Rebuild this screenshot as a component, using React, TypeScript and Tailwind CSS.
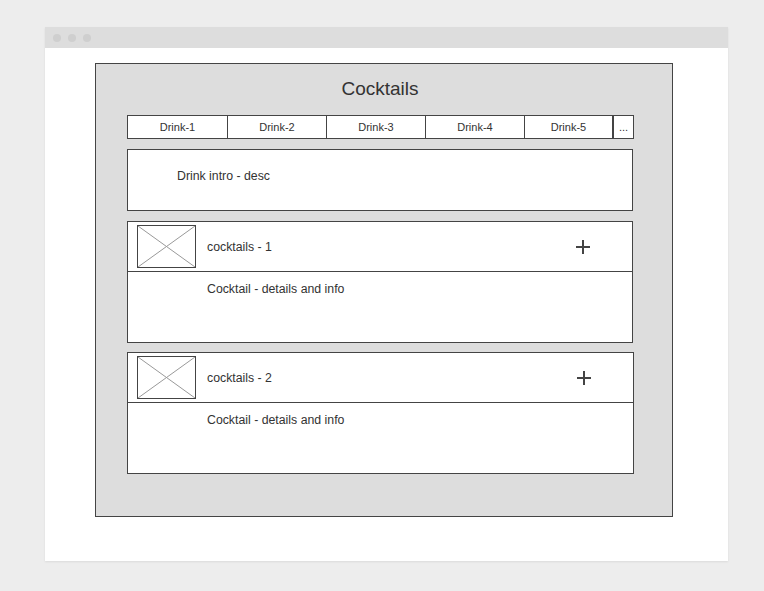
const tabs = [
  { label: "Drink-1", w: "w-[100px]" },
  { label: "Drink-2", w: "w-[99px]" },
  { label: "Drink-3", w: "w-[99px]" },
  { label: "Drink-4", w: "w-[99px]" },
  { label: "Drink-5", w: "w-[88px]" },
];

function Placeholder() {
  return (
    <div className="w-[59px] h-[43px] border border-[#444] bg-white shrink-0">
      <svg width="57" height="41" viewBox="0 0 57 41" className="block">
        <line x1="0" y1="0" x2="57" y2="41" stroke="#999" strokeWidth="1" />
        <line x1="57" y1="0" x2="0" y2="41" stroke="#999" strokeWidth="1" />
      </svg>
    </div>
  );
}

function Plus() {
  return (
    <svg width="16" height="16" viewBox="0 0 16 16" className="block">
      <line x1="8" y1="1" x2="8" y2="15" stroke="#444" strokeWidth="2" />
      <line x1="1" y1="8" x2="15" y2="8" stroke="#444" strokeWidth="2" />
    </svg>
  );
}

function CocktailCard({ name, extra }: { name: string; extra?: boolean }) {
  return (
    <div className={`${extra ? "w-[507px]" : "w-[506px]"} h-[122px] border border-[#444] bg-white flex flex-col`}>
      <div className="h-[50px] border-b border-[#444] flex items-center pl-[9px] shrink-0">
        <Placeholder />
        <span className="ml-[11px] mt-[2px] text-[12.3px] text-[#333]">{name}</span>
        <div className="ml-auto mr-[41px]">
          <Plus />
        </div>
      </div>
      <div className="pl-[79px] pt-[9px] text-[12.3px] leading-4 text-[#333]">Cocktail - details and info</div>
    </div>
  );
}

export default function App() {
  return (
    <div className="min-h-[591px] bg-[#ededed] pt-[27px] pl-[45px] font-['Liberation_Sans',Arial,sans-serif]">
      <div className="w-[683px] h-[534px] bg-white shadow-[0_1px_2px_rgba(0,0,0,0.08)]">
        <div className="h-[21px] bg-[#dddddd] flex items-center gap-[7px] pl-[8px]">
          <span className="w-2 h-2 rounded-full bg-[#cfcfcf]" />
          <span className="w-2 h-2 rounded-full bg-[#cfcfcf]" />
          <span className="w-2 h-2 rounded-full bg-[#cfcfcf]" />
        </div>
        <div className="pt-[15px] pl-[50px]">
          <div className="w-[578px] h-[454px] border border-[#444] bg-[#dddddd] flex flex-col pl-[31px]">
            <h1 className="w-[506px] text-center text-[19px] leading-[22px] text-[#333] mt-[14px]">Cocktails</h1>
            <div className="mt-[15px] w-[507px] h-[24px] border border-[#444] bg-white flex">
              {tabs.map((t) => (
                <div
                  key={t.label}
                  className={`${t.w} border-r border-[#444] flex items-center justify-center text-[11px] text-[#333]`}
                >
                  {t.label}
                </div>
              ))}
              <div className="flex-1 border-l border-[#444] flex items-center justify-center text-[11px] text-[#333]">
                ...
              </div>
            </div>
            <div className="mt-[10px] w-[506px] h-[62px] border border-[#444] bg-white pl-[49px] pt-[18px] text-[12.3px] leading-4 text-[#333]">
              Drink intro - desc
            </div>
            <div className="mt-[10px]">
              <CocktailCard name="cocktails - 1" />
            </div>
            <div className="mt-[9px]">
              <CocktailCard name="cocktails - 2" extra />
            </div>
          </div>
        </div>
      </div>
    </div>
  );
}
